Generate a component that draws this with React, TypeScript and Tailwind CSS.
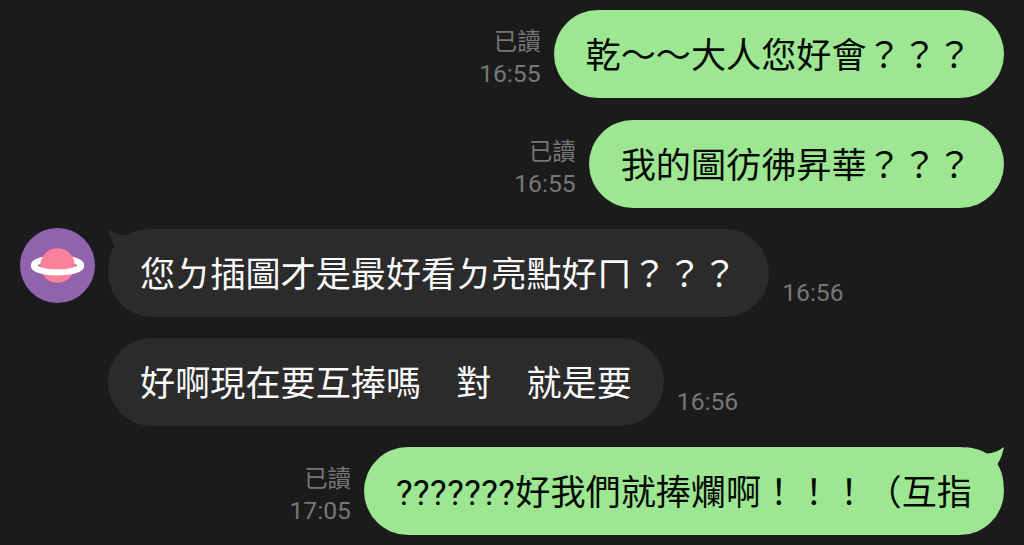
import React from 'react';

interface Message {
  text: string;
  time: string;
  mine?: boolean;
  tail?: boolean;
}

const messages: Message[] = [
  { text: '乾～～大人您好會？？？', time: '16:55', mine: true },
  { text: '我的圖彷彿昇華？？？', time: '16:55', mine: true },
  { text: '您ㄉ插圖才是最好看ㄉ亮點好ㄇ？？？', time: '16:56', tail: true },
  { text: '好啊現在要互捧嗎　對　就是要', time: '16:56' },
  { text: '???????好我們就捧爛啊！！！（互指', time: '17:05', mine: true, tail: true },
];

const Avatar: React.FC = () => (
  <svg className="-mt-[0.5px] block size-[75px]" viewBox="0 0 75 75">
    <circle cx="37.5" cy="37.5" r="37.5" fill="#9263ad" />
    <ellipse cx="37.5" cy="37.4" rx="23.6" ry="7" fill="none" stroke="#fff" strokeWidth="6.2" />
    <circle cx="37.5" cy="37.5" r="17.3" fill="#fb809b" />
    {/* front half of the ring */}
    <path d="M13.9 37.4 A23.6 7 0 0 0 61.1 37.4" fill="none" stroke="#fff" strokeWidth="6.2" />
  </svg>
);

const Tail: React.FC<{ mine?: boolean }> = ({ mine }) => (
  <svg
    className={`absolute top-0 h-[40px] w-[40px] ${mine ? 'right-0 fill-[#9de793]' : 'left-0 -scale-x-100 fill-[#2b2b2b]'}`}
    viewBox="0 0 40 40"
  >
    <path d="M2 0.3 Q14 1.2 22.7 6.5 Q32 6 40 0 Q38.5 9 33.5 17 Q38.5 25 39.5 36 L24 30 L4 10 Z" />
  </svg>
);

const Row: React.FC<{ message: Message }> = ({ message }) => {
  const { text, time, mine, tail } = message;
  // leading half-width marks are set slightly looser than the rest
  const marks = text.match(/^\?*/)![0];

  return (
    <div className={`flex items-end ${mine ? 'justify-end' : ''}`}>
      {!mine && <div className="w-[88px] shrink-0 self-start">{tail && <Avatar />}</div>}
      {mine && (
        <div className="mr-[13px] mb-[8px] text-right text-[24.7px] leading-[32px] text-[#777777]">
          <div className="text-[23.4px]">已讀</div>
          <div>{time}</div>
        </div>
      )}
      <div
        className={`relative h-[88px] rounded-full px-8 pt-[2px] text-[35.13px] leading-[88px] whitespace-pre ${
          mine ? 'bg-[#9de793] text-[#050a05]' : 'bg-[#2b2b2b] text-[#fafafa]'
        }`}
      >
        {tail && <Tail mine={mine} />}
        <span className="relative">
          <span className="tracking-[0.45px]">{marks}</span>
          {text.slice(marks.length)}
        </span>
      </div>
      {!mine && <div className="mb-[8px] ml-[13px] text-[24.7px] leading-[33px] text-[#777777]">{time}</div>}
    </div>
  );
};

export default function App() {
  return (
    <div
      lang="zh-Hant"
      className="flex h-[545px] w-[1024px] flex-col gap-[21.1px] overflow-hidden bg-[#1b1b1b] pt-[10.45px] pr-5 pl-5 font-[Roboto,'Noto_Sans_CJK_TC',sans-serif]"
    >
      {messages.map((message, i) => (
        <Row key={i} message={message} />
      ))}
    </div>
  );
}
